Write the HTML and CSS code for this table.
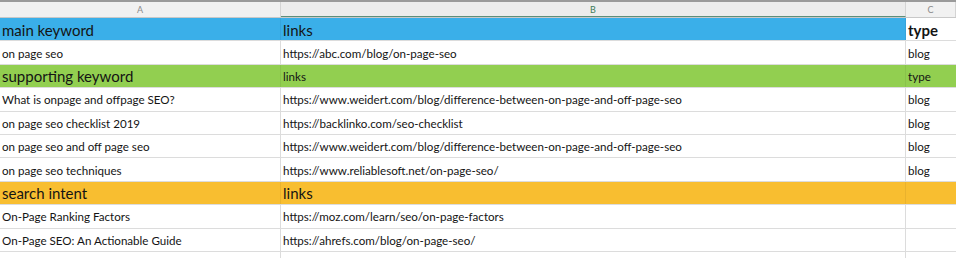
FILE: index.html
```html
<!DOCTYPE html>
<html>
<head>
<meta charset="utf-8">
<link rel="stylesheet" href="styles.css">
</head>
<body>
<div class="sheet">
  <div class="row colhead">
    <div class="cell">A</div>
    <div class="cell sel">B</div>
    <div class="cell">C</div>
  </div>
  <div class="row blue big">
    <div class="cell">main keyword</div>
    <div class="cell">links</div>
    <div class="cell bold">type</div>
  </div>
  <div class="row">
    <div class="cell">on page seo</div>
    <div class="cell">https://abc.com/blog/on-page-seo</div>
    <div class="cell">blog</div>
  </div>
  <div class="row green">
    <div class="cell big">supporting keyword</div>
    <div class="cell">links</div>
    <div class="cell">type</div>
  </div>
  <div class="row">
    <div class="cell">What is onpage and offpage SEO?</div>
    <div class="cell">https://www.weidert.com/blog/difference-between-on-page-and-off-page-seo</div>
    <div class="cell">blog</div>
  </div>
  <div class="row">
    <div class="cell">on page seo checklist 2019</div>
    <div class="cell">https://backlinko.com/seo-checklist</div>
    <div class="cell">blog</div>
  </div>
  <div class="row">
    <div class="cell">on page seo and off page seo</div>
    <div class="cell">https://www.weidert.com/blog/difference-between-on-page-and-off-page-seo</div>
    <div class="cell">blog</div>
  </div>
  <div class="row">
    <div class="cell">on page seo techniques</div>
    <div class="cell">https://www.reliablesoft.net/on-page-seo/</div>
    <div class="cell">blog</div>
  </div>
  <div class="row orange big">
    <div class="cell">search intent</div>
    <div class="cell">links</div>
    <div class="cell"></div>
  </div>
  <div class="row">
    <div class="cell">On-Page Ranking Factors</div>
    <div class="cell">https://moz.com/learn/seo/on-page-factors</div>
    <div class="cell"></div>
  </div>
  <div class="row">
    <div class="cell">On-Page SEO: An Actionable Guide</div>
    <div class="cell">https://ahrefs.com/blog/on-page-seo/</div>
    <div class="cell"></div>
  </div>
  <div class="row">
    <div class="cell"></div>
    <div class="cell"></div>
    <div class="cell"></div>
  </div>
</div>
</body>
</html>
```
FILE: styles.css
```css
html, body {
  margin: 0;
  padding: 0;
  background: #ffffff;
}
body {
  font-family: Lato, "Open Sans", "Liberation Sans", sans-serif;
  color: #141414;
}
.sheet {
  width: 956px;
  height: 258px;
  overflow: hidden;
  box-sizing: border-box;
  border-top: 2px solid #9a9a9a;
}
.row {
  display: grid;
  grid-template-columns: 281px 625px 50px;
  height: 23.4px;
  box-sizing: border-box;
  border-bottom: 1px solid #dcdcdc;
  font-size: 11.6px;
}
.cell {
  display: flex;
  align-items: center;
  padding-left: 2px;
  padding-top: 1px;
  white-space: nowrap;
  overflow: hidden;
  border-right: 1px solid #dcdcdc;
  box-sizing: border-box;
}
.cell:last-child {
  border-right: none;
}
.colhead {
  height: 16px;
  background: #f1f1f1;
  border-bottom: 1px solid #c8c8c8;
  font-size: 9px;
  color: #8a8a8a;
}
.colhead .cell {
  justify-content: center;
  padding: 0;
  border-right: 1px solid #d4d4d4;
}
.colhead .sel {
  color: #3c7d5a;
  border-bottom: 1px solid #5d8e7a;
  background: #ececec;
}
.blue {
  background: #3aafe9;
}
.green {
  background: #92cf50;
}
.orange {
  background: #f8be30;
}
.blue .cell, .green .cell, .orange .cell {
  border-right-color: rgba(0,0,0,0.06);
}
.blue .cell:last-child {
  background: #ffffff;
}
.big {
  font-size: 15px;
}
.bold {
  font-weight: 700;
}
```
